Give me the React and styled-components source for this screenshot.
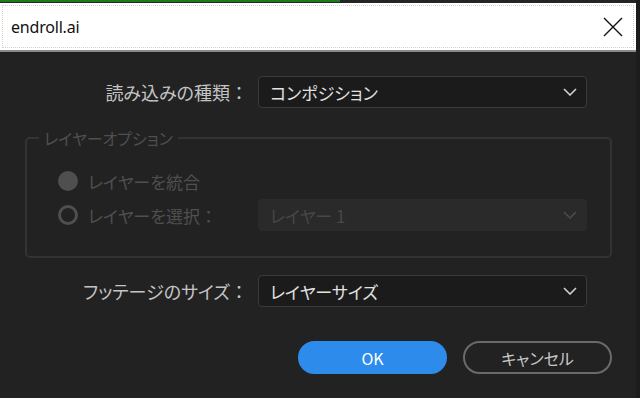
import React from "react";
import styled, { createGlobalStyle } from "styled-components";

const Global = createGlobalStyle`
  html, body { margin: 0; padding: 0; background: #1c1c1c; }
  body { width: 640px; height: 398px; overflow: hidden; }
  * { box-sizing: border-box; }
`;

const JP = `"Noto Sans CJK JP", "Noto Sans", sans-serif`;

const Page = styled.div`
  width: 640px;
  height: 398px;
  display: flex;
  background: #1c1c1c;
`;

const Window = styled.div`
  width: 636px;
  height: 398px;
  display: flex;
  flex-direction: column;
  background: #222222;
`;

const TopStrip = styled.div`
  height: 3px;
  background: #242424;
  display: flex;
`;

const GreenBar = styled.div`
  width: 340px;
  height: 2px;
  background: #1f7a1f;
`;

const TitleBar = styled.div`
  height: 49px;
  background: #ffffff;
  padding: 2px;
  border-bottom: 2px solid #8a8a8a;
`;

const TitleInner = styled.div`
  height: 100%;
  border: 1px dotted #d0d0d0;
  display: flex;
  align-items: center;
  justify-content: space-between;
  padding: 0 10px 0 8px;
`;

const Title = styled.span`
  font-family: "Noto Sans", "Open Sans", sans-serif;
  font-size: 16px;
  color: #111;
  letter-spacing: -0.2px;
`;

const Body = styled.div`
  flex: 1;
  display: flex;
  flex-direction: column;
  padding: 24px 24px 0 25px;
  font-family: ${JP};
`;

const FormRow = styled.div`
  display: grid;
  grid-template-columns: 223px 329px;
  column-gap: 10px;
  align-items: center;
  margin-top: ${(p) => p.$mt || 0}px;
`;

const Label = styled.span`
  text-align: right;
  font-size: 18px;
  color: #c4c4c4;
  white-space: nowrap;
  font-feature-settings: "palt";
`;

const Colon = styled.span`
  font-feature-settings: normal;
`;

const Select = styled.div`
  height: 32px;
  width: 329px;
  flex: none;
  border-radius: 4px;
  background: ${(p) => (p.$disabled ? "#2a2a2a" : "#1b1b1b")};
  border: 1px solid ${(p) => (p.$disabled ? "#2a2a2a" : "#3a3a3a")};
  display: flex;
  align-items: center;
  justify-content: space-between;
  padding: 0 9px 0 11px;
  color: ${(p) => (p.$disabled ? "#474747" : "#e2e2e2")};
  font-size: 17px;
  font-feature-settings: "palt";
`;

const Group = styled.fieldset`
  margin: 22px 0 0 0;
  width: 587px;
  height: 128px;
  border: 2px solid #333333;
  border-radius: 5px;
  padding: 0;
`;

const Legend = styled.legend`
  font-size: 16px;
  color: #4f4f4f;
  padding: 0 5px;
  margin-left: 12px;
  line-height: 1;
  font-feature-settings: "palt";
`;

const GroupContent = styled.div`
  display: flex;
  flex-direction: column;
  padding: 20px 0 0 31px;
`;

const RadioRow = styled.div`
  display: flex;
  align-items: center;
  height: ${(p) => p.$h}px;
`;

const Radio = styled.span`
  width: 20px;
  height: 20px;
  border-radius: 50%;
  flex: none;
  background: ${(p) => (p.$checked ? "#4f4f4f" : "transparent")};
  border: 3px solid #4f4f4f;
`;

const RadioLabel = styled.span`
  margin-left: 10px;
  font-size: 17px;
  color: #4f4f4f;
  white-space: nowrap;
  width: ${(p) => (p.$w ? p.$w + "px" : "auto")};
  font-feature-settings: "palt";
`;

const Buttons = styled.div`
  display: flex;
  justify-content: flex-end;
  gap: 16px;
  width: 587px;
  margin-top: 34px;
`;

const Button = styled.button`
  width: 149px;
  height: 33px;
  border-radius: 17px;
  font-family: ${JP};
  font-size: 16px;
  cursor: pointer;
  background: ${(p) => (p.$primary ? "#2d8ceb" : "transparent")};
  color: ${(p) => (p.$primary ? "#ffffff" : "#c8c8c8")};
  border: 2px solid ${(p) => (p.$primary ? "#2d8ceb" : "#6a6a6a")};
  display: flex;
  align-items: center;
  justify-content: center;
  padding: 0;
  font-feature-settings: "palt";
`;

const Chevron = ({ color = "#cfcfcf" }) => (
  <svg width="14" height="8" viewBox="0 0 14 8">
    <polyline points="1,1 7,7 13,1" fill="none" stroke={color} strokeWidth="1.6" />
  </svg>
);

const CloseIcon = () => (
  <svg width="20" height="20" viewBox="0 0 20 20">
    <path d="M1 1 L19 19 M19 1 L1 19" stroke="#111" strokeWidth="1.4" fill="none" />
  </svg>
);

export default function App() {
  return (
    <Page>
      <Global />
      <Window>
        <TopStrip>
          <GreenBar />
        </TopStrip>
        <TitleBar>
          <TitleInner>
            <Title>endroll.ai</Title>
            <CloseIcon />
          </TitleInner>
        </TitleBar>
        <Body>
          <FormRow>
            <Label>
              読み込みの種類<Colon>：</Colon>
            </Label>
            <Select>
              <span>コンポジション</span>
              <Chevron />
            </Select>
          </FormRow>
          <Group>
            <Legend>レイヤーオプション</Legend>
            <GroupContent>
              <RadioRow $h={30}>
                <Radio $checked />
                <RadioLabel>レイヤーを統合</RadioLabel>
              </RadioRow>
              <RadioRow $h={38}>
                <Radio />
                <RadioLabel $w={170}>
                  レイヤーを選択<Colon>：</Colon>
                </RadioLabel>
                <Select $disabled>
                  <span>レイヤー 1</span>
                  <Chevron color="#4a4a4a" />
                </Select>
              </RadioRow>
            </GroupContent>
          </Group>
          <FormRow $mt={17}>
            <Label>
              フッテージのサイズ<Colon>：</Colon>
            </Label>
            <Select>
              <span>レイヤーサイズ</span>
              <Chevron />
            </Select>
          </FormRow>
          <Buttons>
            <Button $primary>OK</Button>
            <Button>キャンセル</Button>
          </Buttons>
        </Body>
      </Window>
    </Page>
  );
}
